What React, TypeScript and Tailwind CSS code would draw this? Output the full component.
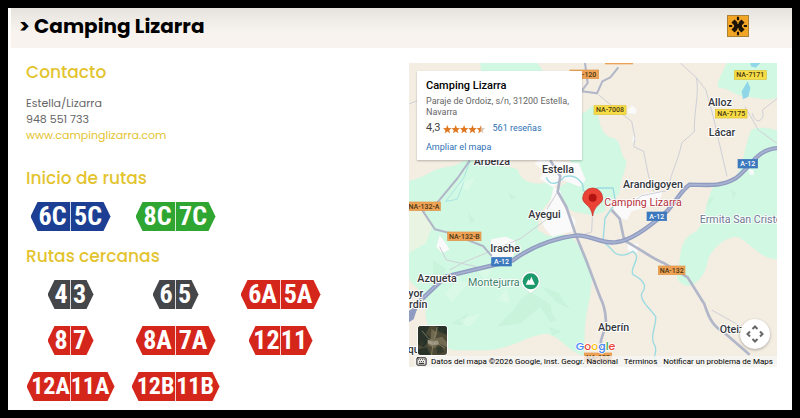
import React from 'react'
import { Keyboard } from 'lucide-react'
import clsx from 'clsx'

type Tone = 'blue' | 'green' | 'gray' | 'red'

interface RouteSign {
  codes: [string, string]
  tone: Tone
  width: string
}

interface Place {
  name: string
  x: number
  y: number
}

interface Road {
  name: string
  x: number
  y: number
  width: number
  kind: 'orange' | 'yellow' | 'blue'
}

const tones: Record<Tone, string> = {
  blue: 'bg-[#1c3f94]',
  green: 'bg-[#2fa532]',
  gray: 'bg-[#45464a]',
  red: 'bg-[#d5261c]',
}

const startRoutes: RouteSign[] = [
  { codes: ['6C', '5C'], tone: 'blue', width: 'w-20' },
  { codes: ['8C', '7C'], tone: 'green', width: 'w-20' },
]

const nearbyRoutes: RouteSign[] = [
  { codes: ['4', '3'], tone: 'gray', width: 'w-[46px]' },
  { codes: ['6', '5'], tone: 'gray', width: 'w-[46px]' },
  { codes: ['6A', '5A'], tone: 'red', width: 'w-20' },
  { codes: ['8', '7'], tone: 'red', width: 'w-[46px]' },
  { codes: ['8A', '7A'], tone: 'red', width: 'w-20' },
  { codes: ['12', '11'], tone: 'red', width: 'w-16' },
  { codes: ['12A', '11A'], tone: 'red', width: 'w-[88px]' },
  { codes: ['12B', '11B'], tone: 'red', width: 'w-[88px]' },
]

const places: Place[] = [
  { name: 'Arbeiza', x: 206, y: 314 },
  { name: 'Estella', x: 411, y: 338 },
  { name: 'Alloz', x: 909, y: 139 },
  { name: 'Lácar', x: 911, y: 229 },
  { name: 'Arandigoyen', x: 654, y: 385 },
  { name: 'Ayegui', x: 370, y: 474 },
  { name: 'Irache', x: 256, y: 577 },
  { name: 'Azqueta', x: 37, y: 667 },
  { name: 'yor', x: 10, y: 712 },
  { name: 'rdín', x: 12, y: 743 },
  { name: 'qu', x: 8, y: 880 },
  { name: 'Aberín', x: 579, y: 814 },
  { name: 'Oteiza', x: 944, y: 818 },
]

const roads: Road[] = [
  { name: 'NA-120', x: 495, y: 30, width: 86, kind: 'orange' },
  { name: 'NA-7171', x: 988, y: 32, width: 96, kind: 'yellow' },
  { name: 'NA-7008', x: 567, y: 137, width: 96, kind: 'yellow' },
  { name: 'NA-7175', x: 931, y: 148, width: 95, kind: 'yellow' },
  { name: 'A-12', x: 999, y: 298, width: 59, kind: 'blue' },
  { name: 'A-12', x: 726, y: 456, width: 59, kind: 'blue' },
  { name: 'A-12', x: 260, y: 592, width: 59, kind: 'blue' },
  { name: 'NA-132-A', x: 8, y: 426, width: 98, kind: 'orange' },
  { name: 'NA-132-B', x: 128, y: 516, width: 100, kind: 'orange' },
  { name: 'NA-132', x: 760, y: 618, width: 80, kind: 'orange' },
  { name: 'NA-122', x: 538, y: 879, width: 82, kind: 'orange' },
]

const roadFill = { orange: '#efa256', yellow: '#f7dd45', blue: '#3c78bd' }
const roadEdge = { orange: '#dd9547', yellow: '#dfc02d', blue: '#3c78bd' }

const motorway =
  'M4 786l42-64 76-72c60-14 130-32 200-48 70-52 150-72 198-76 50 4 76 28 116 20 40-4 90-38 152-94 36-44 46-66 66-78 50 0 90 8 136-18 50-34 60-88 130-92'

const Sign: React.FC<RouteSign> = ({ codes, tone, width }) => (
  <div
    className={clsx(
      'grid h-[29px] grid-cols-2 px-[5px] font-["Roboto_Condensed","Liberation_Sans",sans-serif] font-bold leading-[29px] text-white',
      '[clip-path:polygon(7px_0,calc(100%-7px)_0,100%_50%,calc(100%-7px)_100%,7px_100%,0_50%)]',
      codes[0].length > 2 ? 'text-[24px]' : 'text-[26px]',
      tones[tone],
      width,
    )}
  >
    <span className="flex min-w-0 justify-center border-r border-white/80">{codes[0]}</span>
    <span className="flex min-w-0 justify-center">{codes[1]}</span>
  </div>
)

const SignList: React.FC<{ signs: RouteSign[] }> = ({ signs }) => (
  <ul className="-ml-2 grid max-w-[315px] grid-cols-3 gap-y-[17px]">
    {signs.map((sign) => (
      <li key={sign.codes.join('-')} className="flex justify-center">
        <Sign {...sign} />
      </li>
    ))}
  </ul>
)

const SectionTitle: React.FC<{ children: React.ReactNode }> = ({ children }) => (
  <h2 className="text-[17px] font-medium leading-6 text-[#e3c42f]">{children}</h2>
)

const BrandMark: React.FC = () => (
  <svg viewBox="0 0 22 22" className="size-[22px]" aria-hidden="true">
    <rect x="0.5" y="0.5" width="21" height="21" fill="#f3a526" stroke="#a98238" />
    <g fill="none" stroke="#1d1408">
      <path d="M6 6 16 16M16 6 6 16" strokeWidth="4.5" />
      <path d="M11 1.8v3.4M11 16.8v3.4M2 11h3.2M16.8 11H20" strokeWidth="2.2" />
    </g>
    <path d="M7 11h8" stroke="#1d1408" strokeWidth="3" />
    <path d="M11 7v2M11 13v2" stroke="#f3a526" strokeWidth="1" />
  </svg>
)

const Stars: React.FC = () => {
  const star = 'M5 0l1.3 3.4L10 3.7 7.2 6l.9 3.6L5 7.6 1.9 9.6 2.8 6 0 3.7l3.7-.3z'
  const leftHalf = 'M5 0v7.6L1.9 9.6 2.8 6 0 3.7l3.7-.3z'
  const rightHalf = 'M5 0l1.3 3.4L10 3.7 7.2 6l.9 3.6L5 7.6z'
  return (
    <svg viewBox="0 0 42 10" className="h-[10px] w-[42px]" role="img" aria-label="4,3 de 5">
      {[0, 1, 2, 3, 4].map((i) => (
        <path key={i} d={i < 4 ? star : leftHalf} fill="#e0771f" transform={`translate(${i * 8.4} 1) scale(.86)`} />
      ))}
      <path d={rightHalf} fill="#dcc3b0" transform="translate(33.6 1) scale(.86)" />
    </svg>
  )
}

const MapCanvas: React.FC = () => (
  <svg
    viewBox="12 9 1104 912"
    preserveAspectRatio="xMidYMid slice"
    className="block size-full font-[Roboto,sans-serif]"
    role="img"
    aria-label="Mapa de Estella y alrededores"
  >
    <rect x="12" y="9" width="1104" height="912" fill="#f3ede2" />

    {/* Vegetation */}
    <g fill="#d1f8e2">
      <path d="M226 9h172l20 30v80H280l-50-60z" />
      <path d="M12 362c50-8 68-38 120-42 30-4 42-22 66-19l40 0c20 22 70 12 100 28 12 46 66 46 90 36 20-2 24 28 14 46l-38 50-6 50c26 10 24 26 60 10l40 8c32 32 60 78 62 120 2 44-16 102-20 150l-4 88c-50-14-64-54-110-66-60 4-100 44-180 50l-104 0c-50-24-76-58-80-110 4-50-18-70-42-92l-18-36z" />
      <path d="M526 160c20 0 22-16 38-22l16 30c6 40 18 62 50 68 22 14 12 46 34 66-2 40-22 58-20 98-18 22-42 20-44 54-30 16-56 10-96 0-26-14-40-32-46-60 8-28 50-28 52-50l-14-42z" />
      <path d="M964 9h152v104c-30 12-70-2-110-6-30-12-40-24-66-24-8-20 18-50 24-74z" />
      <path d="M1116 212c-26-10-62-12-78-2-16 42-24 92-30 112-24 54-60 36-84 60-30 62-20 102-50 132-56 26-42 70-54 104-12 34-2 50 26 60 30 0 60-40 64-84 20-40 64-68 90-62 46 26 66 64 116 66z" />
    </g>
    <g fill="#bfecd2" opacity=".4">
      <path d="M346 720l30-24 60 36 4 28 14 20-18 6-30-46-60 50-70 10 50-50z" />
      <path d="M410 680l50 20 34 46-40-20z" />
      <path d="M84 600l38 26-10 44-26-24zM190 460l20 20-14 10zM980 390l14 10-10 18zM930 410l-26 34 10-30z" />
      <path d="M430 800l40 14-26 12zM140 790l50-30-20 36zM310 400l24 10-14 10z" />
    </g>
    <g fill="#fff" opacity=".2">
      <path d="M120 700l40-40 30 10-50 56zM220 630l50-20-30 54zM150 380l60-30-20 40zM160 780l70-20-40 40zM280 720l24-40 10 50z" />
    </g>
    <path d="M12 440l40 0 30 60-20 50-50 30z" fill="#e9f4e2" />

    {/* Built-up areas */}
    <g fill="#fafafb">
      <path d="M402 300l120 10 20 50-18 20-50-20-30 22-40-26 14-22-30-24z" />
      <path d="M446 380l20 12 12 50 34 40-6 30-64 18-24-26-14-40 30-30z" />
      <path d="M258 538l44-8 28 12-4 46-66 14zM104 526l18 24 12 18-22 12-18-20z" />
      <path d="M624 440l96-40 54-8-14 38-80 24-14 26-30-10zM668 550l32 2-4 28-28-10z" />
      <path d="M668 150l14-14 14 14-6 12-20-2zM684 226l12 10-14 12zM1032 328l14 2v14h-12zM986 800l60 8-20 30z" />
    </g>

    {/* Water */}
    <path d="M1036 9h30l-14 14-14-4zM1028 64l8 20-6 26-16 8-4-24z" fill="#8fd6e8" />
    <g fill="none" stroke="#9adbe2" strokeWidth="4">
      <path d="M424 352c10 30 40 18 54-2 40-10 60 24 56 40l16 16 28-22h46l8 44-32 46-6 70 24 22c20 30 50 18 66 8 30 20-14 50 0 70 40 20 40 40 26 56-6 24 30 50 42 70 4 24-18 54-6 80 18 20-8 40 8 60 10 14-4 20-10 38" />
      <path d="M196 302l-20 52-54 70 34-6 20-50" strokeWidth="3" opacity=".7" />
    </g>

    {/* Minor roads */}
    <g fill="none" stroke="#cfd0d7" strokeWidth="3">
      <path d="M436 470l-90 66-172 72-40 22M104 560l20 40 90 20M562 470l-2 46-24 8M456 398l-30 50" />
      <path d="M826 9l48 44 28 36 20 70 44 190M874 53c10 50-8 100-6 162l-38 34c-8 50-38 100-40 142l-80 16-42 30" />
      <path d="M580 104l60 50 40 30 10 50-4 26 30 14 18 90 12 30" />
      <path d="M1020 140l40 70 56 40M1042 160c10 40 40 20 30-10l44-34M920 750l100 56M12 132l30-12" />
    </g>
    <g fill="none" stroke="#b1b6c8" strokeLinejoin="round">
      <path d="M540 9l8 60-18 24M640 22l-24 30-24 12-16 36-46-6M194 302l-36 52-58 70-46 30 36 54 46 12 98 38 26 30" strokeWidth="6" />
      <path d="M436 301l30 48-8 46 26 46 30 88 28 68 44 116c20 40 14 62 18 78l-16 50-2 54M620 450l24 26 14 66c50 26 80 52 120 68l70 42 50 80c16 50 30 70 60 86l76 66" strokeWidth="8" />
    </g>

    {/* Motorway */}
    <g fill="none" strokeLinejoin="round">
      <path d={motorway} stroke="#8f9bc0" strokeWidth="13" />
      <path d={motorway} stroke="#a9b3d1" strokeWidth="5" />
    </g>
    <path d="M12 786v-34l28-18-14 44z" fill="#8f9bc0" />

    {roads.map((road) => (
      <g key={`${road.name}-${road.x}`}>
        <rect
          x={road.x}
          y={road.y}
          width={road.width}
          height="26"
          fill={roadFill[road.kind]}
          stroke={roadEdge[road.kind]}
          strokeWidth="2"
        />
        <text
          x={road.x + road.width / 2}
          y={road.y + 20}
          textAnchor="middle"
          fontSize="21"
          fontWeight="500"
          fill={road.kind === 'blue' ? '#fff' : '#4a3713'}
        >
          {road.name}
        </text>
      </g>
    ))}
    <path d="M600 9h84v4h-84z" fill="#efa256" />

    <g fontSize="32" fontWeight="500" fill="#33363b" stroke="#fff" strokeWidth="6" strokeLinejoin="round" paintOrder="stroke">
      {places.map((place) => (
        <text key={place.name} x={place.x} y={place.y}>{place.name}</text>
      ))}
    </g>
    <g fontSize="32" stroke="#fff" strokeWidth="5" strokeLinejoin="round" paintOrder="stroke">
      <text x="884" y="490" fill="#6b7791">Ermita San Cristóbal</text>
      <text x="189" y="679" fill="#3b8268">Montejurra</text>
      <text x="598" y="437" fill="#b5303a">Camping Lizarra</text>
    </g>

    {/* Mountain marker */}
    <path d="M377 700c-8-10-29-14-29-37a29 29 0 0 1 58 0c0 23-21 27-29 37z" fill="#fff" stroke="#c3d2ca" />
    <circle cx="377" cy="664" r="24" fill="#1d9a6c" />
    <path d="M362 674l8-16 4 4 5-12 11 24z" fill="#fff" />

    {/* Campsite marker */}
    <path d="M563 468c-5-36-30-34-30-54a30 30 0 0 1 60 0c0 20-25 18-30 54z" fill="#ea4335" stroke="#c5221f" strokeWidth="2" />
    <circle cx="563" cy="413" r="12" fill="#b31412" />

    <text x="512" y="869" fontSize="33" fontWeight="500" stroke="#fff" strokeWidth="4" paintOrder="stroke" fontFamily="Poppins, sans-serif">
      <tspan fill="#4285f4">G</tspan>
      <tspan fill="#ea4335">o</tspan>
      <tspan fill="#fbbc04">o</tspan>
      <tspan fill="#4285f4">g</tspan>
      <tspan fill="#34a853">l</tspan>
      <tspan fill="#ea4335">e</tspan>
    </text>
  </svg>
)

const SatelliteThumb: React.FC = () => (
  <svg viewBox="0 0 30 30" className="size-full" aria-hidden="true">
    <rect width="30" height="30" fill="#4c4a37" />
    <path d="M0 0h12l-4 8 6 5-8 9-6-3zM18 0h12v9l-8-3zM0 24l9-2 4 8H0z" fill="#29332a" />
    <path d="M14 3l6 4-2 6 7-2 5 6v5l-8-4-5 5-7-3 3-6z" fill="#716a51" />
    <path d="M10 14l5 2 5-1 2 4-7 1-5-2z" fill="#a19b87" />
    <path d="M4 5l7 8 5 2 12 8M16 15l-2 15M20 1l-3 12" fill="none" stroke="#8f886d" strokeWidth=".8" />
    <path d="M19 22l5-1 3 6-7 2zM2 15l4 3-3 4zM23 3l4 1-2 4z" fill="#343a2b" />
  </svg>
)

const MapPanel: React.FC = () => (
  <section className="relative aspect-[368/304] overflow-hidden font-[Roboto,sans-serif]">
    <MapCanvas />

    <div className="absolute left-2 top-2 w-[165px] bg-white px-[9px] pb-[6px] pt-2 shadow-[0_1px_2px_rgba(0,0,0,0.25)]">
      <h3 className="text-[11px] font-medium leading-[13px] text-black">Camping Lizarra</h3>
      <p className="mt-1 whitespace-nowrap text-[9px] leading-[11px] text-[#666]">
        Paraje de Ordoiz, s/n, 31200 Estella,
        <br />
        Navarra
      </p>
      <div className="mt-1 flex h-[13px] items-center text-[#2f72b5]">
        <span className="mr-[2px] text-[11px] text-[#444]">4,3</span>
        <Stars />
        <a href="#resenas" className="ml-2 text-[9px]">561 reseñas</a>
      </div>
      <a href="#mapa" className="mt-[6px] block text-[9px] leading-[13px] text-[#2f72b5]">Ampliar el mapa</a>
    </div>

    <button
      type="button"
      aria-label="Mostrar imágenes de satélite"
      className="absolute bottom-[11px] left-2 size-[31px] overflow-hidden rounded-sm border border-white"
    >
      <SatelliteThumb />
    </button>

    <button
      type="button"
      aria-label="Controles de la cámara del mapa"
      className="absolute bottom-[18px] right-[7px] flex size-[30px] items-center justify-center rounded-full bg-white shadow-[0_1px_3px_rgba(0,0,0,0.3)]"
    >
      <svg viewBox="0 0 18 18" className="size-[18px]" fill="none" stroke="#666" strokeWidth="2" aria-hidden="true">
        <path d="M6.5 4 9 1.5 11.5 4M6.5 14 9 16.5 11.5 14M4 6.5 1.5 9 4 11.5M14 6.5 16.5 9 14 11.5" />
      </svg>
    </button>

    <footer className="absolute bottom-0 right-0 flex h-[11px] items-center whitespace-nowrap bg-[#f5f5f5]/80 pl-[2px] pr-1 text-[8px] leading-[11px] text-black">
      <button type="button" aria-label="Combinaciones de teclas" className="mr-1">
        <Keyboard size={11} strokeWidth={2} />
      </button>
      <span>Datos del mapa ©2026 Google, Inst. Geogr. Nacional</span>
      <a href="#terminos" className="ml-[6px]">Términos</a>
      <a href="#notificar" className="ml-[6px]">Notificar un problema de Maps</a>
    </footer>
  </section>
)

export default function App() {
  return (
    <div className="min-h-screen bg-black p-2 font-[Poppins,Inter,sans-serif]">
      <div className="min-h-[402px] bg-white">
        <header className="ml-[3px] flex h-10 items-center justify-between bg-gradient-to-b from-[#e6e3df] to-[#f8f3ef] to-60% pb-1 pl-2 pr-[43px]">
          <h1 className="text-[20px] font-bold leading-8 text-black">&gt; Camping Lizarra</h1>
          <BrandMark />
        </header>

        <main className="grid grid-cols-[383fr_368fr] items-start pb-2 pl-[18px] pr-[15px] pt-[15px]">
          <div className="min-w-0">
            <div className="-mt-[3px]">
              <SectionTitle>Contacto</SectionTitle>
            </div>
            <address className="mt-[11px] text-[11px] not-italic leading-4 text-[#666]">
              <p>Estella/Lizarra</p>
              <p>948 551 733</p>
              <a href="#web" className="text-[#e3c42f]">www.campinglizarra.com</a>
            </address>

            <div className="mb-3 mt-[23px]">
              <SectionTitle>Inicio de rutas</SectionTitle>
            </div>
            <SignList signs={startRoutes} />

            <div className="mb-3 mt-[13px]">
              <SectionTitle>Rutas cercanas</SectionTitle>
            </div>
            <SignList signs={nearbyRoutes} />
          </div>

          <MapPanel />
        </main>
      </div>
    </div>
  )
}
